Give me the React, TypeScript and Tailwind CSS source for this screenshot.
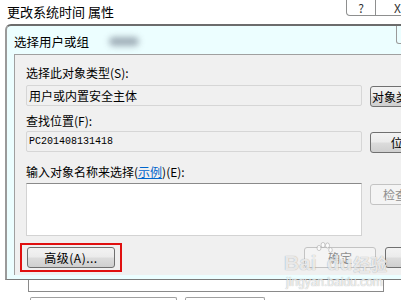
import React from "react";

const font = { fontFamily: '"Noto Sans CJK SC", "Noto Sans", sans-serif' };

function WinButton({
  label,
  className = "",
  disabled = false,
  align = "center",
}: {
  label: React.ReactNode;
  className?: string;
  disabled?: boolean;
  align?: "center" | "left";
}) {
  return (
    <div
      className={
        "h-[21px] shrink-0 rounded-[3px] border flex items-center whitespace-nowrap overflow-hidden text-[12px] leading-[14px] " +
        (align === "center" ? "justify-center " : "justify-start pl-px ") +
        (disabled
          ? "border-[#c3c3c3] bg-[#f4f4f4] text-[#8f8f8f] "
          : "border-[#707070] bg-[linear-gradient(to_bottom,#f3f3f3_0%,#ebebeb_48%,#dcdcdc_52%,#cfcfcf_100%)] text-black ") +
        className
      }
    >
      {label}
    </div>
  );
}

export default function App() {
  return (
    <div
      className="relative w-[401px] h-[300px] overflow-hidden bg-white text-black"
      style={font}
    >
      {/* outer window title */}
      <div className="h-[24px] flex items-start">
        <span className="ml-[7px] mt-[4px] text-[13px] leading-[16px]">
          更改系统时间 属性
        </span>
        <div className="ml-auto flex">
          <div className="w-[30px] h-[16px] border border-t-0 border-[#8e8f8f] rounded-bl-[4px] bg-white flex items-center justify-center text-[12px] leading-[12px] text-[#333]">
            ?
          </div>
          <div className="w-[25px] h-[16px] border-b border-[#8e8f8f] bg-white flex items-center pl-[18px] text-[12px] leading-[12px] text-[#333]">
            X
          </div>
        </div>
      </div>

      {/* inner dialog */}
      <div className="ml-[5px] w-[420px] h-[256px] rounded-tl-[6px] border-t-2 border-l-2 border-b border-t-[#6c6c6c] border-l-[#9a9a9a] border-b-[#7a7a7a] bg-[#ecfeff] flex flex-col">
        <div className="h-[28px] shrink-0 flex items-start pl-[7px] pt-[8px]">
          <span className="text-[12.5px] leading-[16px]">选择用户或组</span>
          <div className="ml-[20px] mt-[3px] w-[30px] h-[9px] rounded-full bg-[#8c9aa6] blur-[3px] opacity-80" />
          <div className="ml-auto mr-[5px] -mt-[8px] w-[24px] h-[18px] border border-t-0 border-[#9a9a9a] rounded-b-[3px]" />
        </div>
        <div className="ml-[7px] mb-[4px] flex-1 border-t border-l border-[#a0a0a0] bg-[#f0f0f0] pl-[11px] flex flex-col text-[12px] leading-[16px]">
          <div className="mt-[10px]">选择此对象类型(S):</div>
          <div className="mt-[4px] flex items-start">
            <div className="w-[336px] shrink-0 h-[21px] rounded-[2px] border border-[#d6d6d6] bg-[#f0f0f0] pl-[2px] flex items-center">
              用户或内置安全主体
            </div>
            <WinButton
              label="对象类型(O)..."
              align="left"
              className="ml-[8px] mt-px w-[90px] h-[20px] border-[#3c3c3c]"
            />
          </div>

          <div className="mt-[6px]">查找位置(F):</div>
          <div className="mt-[2px] flex items-start">
            <div
              className="w-[336px] shrink-0 h-[21px] rounded-[2px] border border-[#d6d6d6] bg-[#f0f0f0] pl-[2px] flex items-center text-[10px]"
              style={{ fontFamily: '"Liberation Mono", monospace' }}
            >
              PC201408131418
            </div>
            <WinButton label="位置(L)..." className="ml-[8px] mt-px w-[90px]" />
          </div>

          <div className="mt-[11px]">
            输入对象名称来选择(
            <span className="text-[#0066cc] underline">示例</span>)(E):
          </div>
          <div className="mt-[3px] flex items-start">
            <div className="w-[336px] shrink-0 h-[53px] border border-[#d3d3d3] border-t-[#8a8a8a] bg-white" />
            <WinButton
              label="检查名称(C)"
              disabled
              className="ml-[8px] mt-px w-[90px]"
            />
          </div>

          <div className="mt-[7px] flex items-start">
            <div className="-ml-[6px] shrink-0 w-[102px] h-[29px] border-2 border-[#e01010] pl-[5px] pt-[2px]">
              <WinButton label="高级(A)..." className="w-[88px] tracking-[0.5px]" />
            </div>
            <WinButton label="确定" disabled className="ml-[182px] mt-[4px] w-[72px]" />
            <WinButton label="取消" className="ml-[9px] mt-[4px] w-[72px]" />
          </div>
        </div>
      </div>

      {/* outer dialog remainder */}
      <div className="ml-[28px] w-[356px] h-[12px] border border-t-0 border-[#8a8a8a]" />
      <div className="mt-[5px] flex">
        <div className="ml-[30px] w-[147px] h-[8px] border border-b-0 border-[#a0a0a0] rounded-t-[2px]" />
        <div className="ml-[8px] w-[80px] h-[8px] border border-b-0 border-[#a0a0a0] rounded-t-[2px]" />
      </div>

      {/* watermark overlay */}
      <div className="absolute left-[284px] top-[252px] flex items-end text-[rgba(255,255,255,0.8)] [text-shadow:0_0_1px_rgba(0,0,0,0.4)] pointer-events-none">
        <span className="text-[21px] leading-[22px] font-bold" style={{ fontFamily: '"Liberation Sans", sans-serif' }}>
          Bai
        </span>
        <svg width="18" height="20" viewBox="0 0 18 20" className="-ml-[2px] -mt-[10px] self-start opacity-80">
          <g fill="white" stroke="#999" strokeWidth="0.6">
            <ellipse cx="4" cy="6" rx="2" ry="2.6" />
            <ellipse cx="8" cy="3" rx="2" ry="2.6" />
            <ellipse cx="12.5" cy="3.5" rx="2" ry="2.6" />
            <ellipse cx="15.5" cy="8" rx="1.8" ry="2.4" />
          </g>
        </svg>
        <span className="-ml-[6px] text-[21px] leading-[22px] font-bold" style={{ fontFamily: '"Liberation Sans", sans-serif' }}>
          du
        </span>
        <span className="ml-[1px] text-[17px] leading-[20px] font-bold">经验</span>
      </div>
      <div
        className="absolute left-[286px] top-[275px] text-[12px] leading-[14px] text-[rgba(255,255,255,0.8)] [text-shadow:0_0_1px_rgba(0,0,0,0.4)] pointer-events-none"
        style={{ fontFamily: '"Liberation Sans", sans-serif' }}
      >
        jingyan.baidu.com
      </div>
    </div>
  );
}
